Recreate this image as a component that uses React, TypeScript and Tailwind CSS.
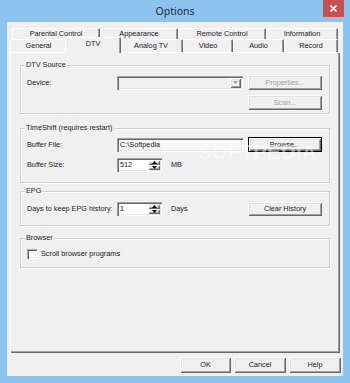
import React from "react";

// classic win32 bevels
const raised =
  "bg-[#f0f0f0] shadow-[inset_1px_1px_0_#fff,inset_-1px_-1px_0_#696969,inset_2px_2px_0_#e3e3e3,inset_-2px_-2px_0_#a0a0a0]";
const sunken =
  "shadow-[inset_1px_1px_0_#a0a0a0,inset_2px_2px_0_#696969,inset_-1px_-1px_0_#fff,inset_-2px_-2px_0_#e3e3e3]";

const Arrow = ({ up, color = "#000" }: { up?: boolean; color?: string }) => (
  <svg width="5" height="3" viewBox="0 0 5 3">
    <path d={up ? "M0 3 L2.5 0 L5 3 Z" : "M0 0 L5 0 L2.5 3 Z"} fill={color} />
  </svg>
);

const Button = ({
  children,
  className,
  disabled,
  isDefault,
}: {
  children: React.ReactNode;
  className: string;
  disabled?: boolean;
  isDefault?: boolean;
}) => (
  <div
    className={`flex items-center justify-center ${raised} ${
      isDefault ? "border border-black" : ""
    } ${disabled ? "text-[#a0a0a0]" : "text-[#1a1a1a]"} ${className}`}
  >
    {children}
  </div>
);

const Spinner = ({ value }: { value: string }) => (
  <div className={`w-[45px] h-[14px] bg-white flex items-stretch ${sunken} p-[2px]`}>
    <span className="flex-1 pl-[1px] leading-[10px]">{value}</span>
    <div className="w-[12px] flex flex-col">
      <div className={`flex-1 flex items-center justify-center ${raised}`}>
        <Arrow up />
      </div>
      <div className={`flex-1 flex items-center justify-center ${raised}`}>
        <Arrow />
      </div>
    </div>
  </div>
);

const GroupBox = ({
  label,
  className,
  children,
}: {
  label: string;
  className: string;
  children?: React.ReactNode;
}) => (
  <div
    className={`relative border border-[#cfcfcf] shadow-[inset_1px_1px_0_#fff,1px_1px_0_#fff] pl-[6px] pr-[7px] ${className}`}
  >
    <span className="absolute -top-[5px] left-[4px] px-[1px] bg-[#f0f0f0] leading-none">
      {label}
    </span>
    {children}
  </div>
);

const Tab = ({ label, className }: { label: string; className: string }) => (
  <div
    className={`h-full flex items-center justify-center bg-[#f0f0f0] rounded-t-[2px] shadow-[inset_1px_1px_0_#fff,inset_-1px_0_0_#696969,inset_-2px_0_0_#a0a0a0] ${className}`}
  >
    {label}
  </div>
);

export default function App() {
  return (
    <div className="w-[350px] h-[383px] bg-[#8dc3ef] flex flex-col relative overflow-hidden text-[7.3px] leading-none text-[#1a1a1a] font-['Liberation_Sans',Arial,sans-serif]">
      {/* title bar */}
      <div className="h-[22px] relative flex items-center justify-center">
        <span className="text-[10.5px] font-['Noto_Sans',sans-serif] text-[#1e2b3a]">
          Options
        </span>
        <div className="absolute right-[6px] top-0 w-[21px] h-[17px] bg-[#c75050] flex items-center justify-center">
          <svg width="7" height="7" viewBox="0 0 7 7">
            <path d="M0.5 0.5 L6.5 6.5 M6.5 0.5 L0.5 6.5" stroke="#fff" strokeWidth="1.6" />
          </svg>
        </div>
      </div>

      {/* client */}
      <div className="mx-[7px] h-[354px] bg-[#f0f0f0] flex flex-col px-[3px] pt-[6px]">
        {/* back row of tabs */}
        <div className="h-[11px] flex ml-[2px]">
          <Tab label="Parental Control" className="w-[88px]" />
          <Tab label="Appearance" className="w-[78px]" />
          <Tab label="Remote Control" className="w-[88px]" />
          <Tab label="Information" className="w-[72px]" />
        </div>
        {/* front row of tabs */}
        <div className="h-[13px] flex items-end">
          <Tab label="General" className="w-[57px]" />
          <div className="w-[56px] -mx-[2px] h-[16px] relative top-[1px] z-10 flex items-center justify-center pb-[2px] bg-[#f0f0f0] rounded-t-[2px] shadow-[inset_1px_1px_0_#fff,inset_-1px_0_0_#696969,inset_-2px_0_0_#a0a0a0]">
            DTV
          </div>
          <Tab label="Analog TV" className="w-[64px]" />
          <Tab label="Video" className="w-[50px]" />
          <Tab label="Audio" className="w-[51px]" />
          <Tab label="Record" className="w-[54px]" />
        </div>

        {/* tab page */}
        <div className="h-[301px] relative flex flex-col px-[10px] pt-[13px] shadow-[inset_1px_1px_0_#fff,inset_-1px_-1px_0_#696969,inset_-2px_-2px_0_#a0a0a0]">
          <GroupBox label="DTV Source" className="h-[49px] pt-[9px]">
            <div className="h-[15px] flex items-center">
              <span className="w-[90px]">Device:</span>
              <div className={`w-[126px] h-[14px] bg-[#f0f0f0] flex justify-end p-[2px] ${sunken}`}>
                <div className={`w-[11px] flex items-center justify-center ${raised}`}>
                  <Arrow color="#a0a0a0" />
                </div>
              </div>
              <Button className="ml-[5px] w-[74px] h-[15px]" disabled>
                Properties...
              </Button>
            </div>
            <div className="mt-[5px] flex justify-end">
              <Button className="w-[74px] h-[15px]" disabled>
                Scan...
              </Button>
            </div>
          </GroupBox>

          <GroupBox label="TimeShift (requires restart)" className="mt-[14px] h-[55px] pt-[8px]">
            <div className="h-[15px] flex items-center">
              <span className="w-[90px]">Buffer File:</span>
              <div className={`w-[126px] h-[14px] bg-[#f7f7f7] flex items-center pl-[3px] ${sunken}`}>
                C:\Softpedia
              </div>
              <Button className="ml-[5px] w-[74px] h-[15px]" isDefault>
                Browse...
              </Button>
            </div>
            <div className="mt-[6px] h-[14px] flex items-center">
              <span className="w-[90px]">Buffer Size:</span>
              <Spinner value="512" />
              <span className="ml-[9px]">MB</span>
            </div>
          </GroupBox>

          <GroupBox label="EPG" className="mt-[8px] h-[35px] pt-[10px]">
            <div className="h-[14px] flex items-center">
              <span className="w-[90px]">Days to keep EPG history:</span>
              <Spinner value="1" />
              <span className="ml-[9px]">Days</span>
              <Button className="ml-auto w-[74px] h-[14px]">Clear History</Button>
            </div>
          </GroupBox>

          <GroupBox label="Browser" className="mt-[12px] h-[30px] pt-[10px]">
            <div className="h-[10px] flex items-center">
              <div className={`w-[10px] h-[10px] bg-white ${sunken}`} />
              <span className="ml-[4px]">Scroll browser programs</span>
            </div>
          </GroupBox>

          {/* watermark */}
          <div className="absolute left-[188px] top-[90px] text-[20px] font-bold tracking-[0.5px] text-white/50 pointer-events-none">
            SOFTPEDIA
          </div>
        </div>

        {/* dialog buttons */}
        <div className="mt-[4px] -mr-[1px] flex justify-end gap-[3px]">
          <Button className="w-[51px] h-[16px]">OK</Button>
          <Button className="w-[52px] h-[16px]">Cancel</Button>
          <Button className="w-[52px] h-[16px]">Help</Button>
        </div>
      </div>
    </div>
  );
}
